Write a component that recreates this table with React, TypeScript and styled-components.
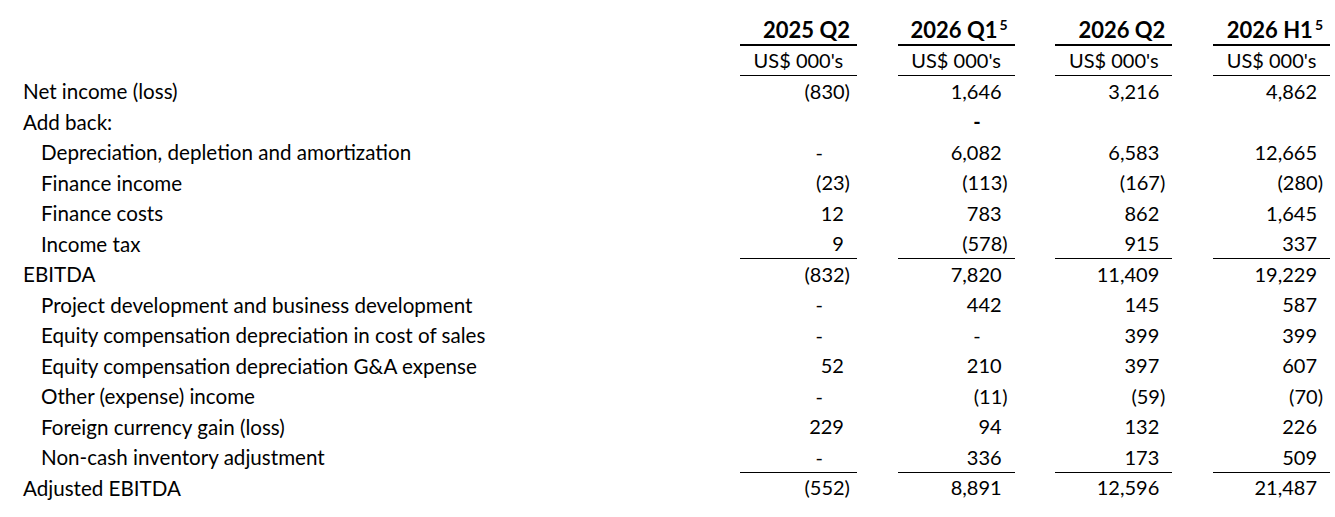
import React from "react";
import styled, { createGlobalStyle } from "styled-components";

const GlobalStyle = createGlobalStyle`
  body {
    margin: 0;
    background: #ffffff;
    color: #000000;
    font-family: Lato, "Open Sans", sans-serif;
  }
`;

type Value = string | number | null;

interface Line {
  label: string;
  indent?: boolean;
  values: Value[];
  underline?: boolean;
  boldDash?: boolean;
}

const columns = [
  { title: "2025 Q2", note: "" },
  { title: "2026 Q1", note: "5" },
  { title: "2026 Q2", note: "" },
  { title: "2026 H1", note: "5" },
];

const lines: Line[] = [
  { label: "Net income (loss)", values: [-830, 1646, 3216, 4862] },
  { label: "Add back:", values: ["", null, "", ""], boldDash: true },
  { label: "Depreciation, depletion and amortization", indent: true, values: [null, 6082, 6583, 12665] },
  { label: "Finance income", indent: true, values: [-23, -113, -167, -280] },
  { label: "Finance costs", indent: true, values: [12, 783, 862, 1645] },
  { label: "Income tax", indent: true, values: [9, -578, 915, 337], underline: true },
  { label: "EBITDA", values: [-832, 7820, 11409, 19229] },
  { label: "Project development and business development", indent: true, values: [null, 442, 145, 587] },
  { label: "Equity compensation depreciation in cost of sales", indent: true, values: [null, null, 399, 399] },
  { label: "Equity compensation depreciation G&A expense", indent: true, values: [52, 210, 397, 607] },
  { label: "Other (expense) income", indent: true, values: [null, -11, -59, -70] },
  { label: "Foreign currency gain (loss)", indent: true, values: [229, 94, 132, 226] },
  { label: "Non-cash inventory adjustment", indent: true, values: [null, 336, 173, 509], underline: true },
  { label: "Adjusted EBITDA", values: [-552, 8891, 12596, 21487] },
];

const Sheet = styled.div`
  padding: 15px 5px 0 23px;
  width: 1335px;
  box-sizing: border-box;
`;

const Row = styled.div`
  display: grid;
  grid-template-columns: 1fr repeat(4, 117px);
  column-gap: 40.7px;
  height: 30.5px;
`;

const Label = styled.div<{ $indent?: boolean }>`
  display: flex;
  align-items: center;
  padding-left: ${(p) => (p.$indent ? "18px" : "0")};
  font-size: 20.6px;
  white-space: nowrap;
`;

const HeadCell = styled.div`
  text-align: right;
  padding-right: 7px;
  border-bottom: 2px solid #000;
  font-size: 22px;
  font-weight: 700;
  line-height: 29px;
  white-space: nowrap;
`;

const Note = styled.sup`
  font-size: 14px;
  margin-left: 2px;
  vertical-align: 8px;
  line-height: 0;
`;

const UnitCell = styled.div`
  display: flex;
  align-items: center;
  justify-content: center;
  border-bottom: 1px solid #000;
  font-size: 20px;
`;

type Kind = "pos" | "neg" | "dash" | "empty";

const padFor: Record<Kind, string> = {
  pos: "13px",
  neg: "7px",
  dash: "34px",
  empty: "0",
};

const ValueCell = styled.div<{ $kind: Kind; $underline?: boolean; $bold?: boolean }>`
  display: flex;
  align-items: center;
  justify-content: flex-end;
  padding-right: ${(p) => padFor[p.$kind]};
  border-bottom: ${(p) => (p.$underline ? "1px solid #000" : "1px solid transparent")};
  font-size: 20px;
  font-weight: ${(p) => (p.$bold ? 700 : 400)};
`;

const format = (v: Value): { text: string; kind: Kind } => {
  if (v === null) return { text: "-", kind: "dash" };
  if (v === "") return { text: "", kind: "empty" };
  const n = Number(v);
  const body = Math.abs(n).toLocaleString("en-US");
  return n < 0 ? { text: `(${body})`, kind: "neg" } : { text: body, kind: "pos" };
};

export default function App() {
  return (
    <Sheet>
      <GlobalStyle />
      <Row>
        <Label />
        {columns.map((c) => (
          <HeadCell key={c.title}>
            {c.title}
            {c.note && <Note>{c.note}</Note>}
          </HeadCell>
        ))}
      </Row>
      <Row>
        <Label />
        {columns.map((c) => (
          <UnitCell key={c.title}>US$ 000's</UnitCell>
        ))}
      </Row>
      {lines.map((line) => (
        <Row key={line.label}>
          <Label $indent={line.indent}>{line.label}</Label>
          {line.values.map((v, i) => {
            const { text, kind } = format(v);
            return (
              <ValueCell
                key={i}
                $kind={kind}
                $underline={line.underline}
                $bold={line.boldDash && kind === "dash"}
              >
                {text}
              </ValueCell>
            );
          })}
        </Row>
      ))}
    </Sheet>
  );
}
